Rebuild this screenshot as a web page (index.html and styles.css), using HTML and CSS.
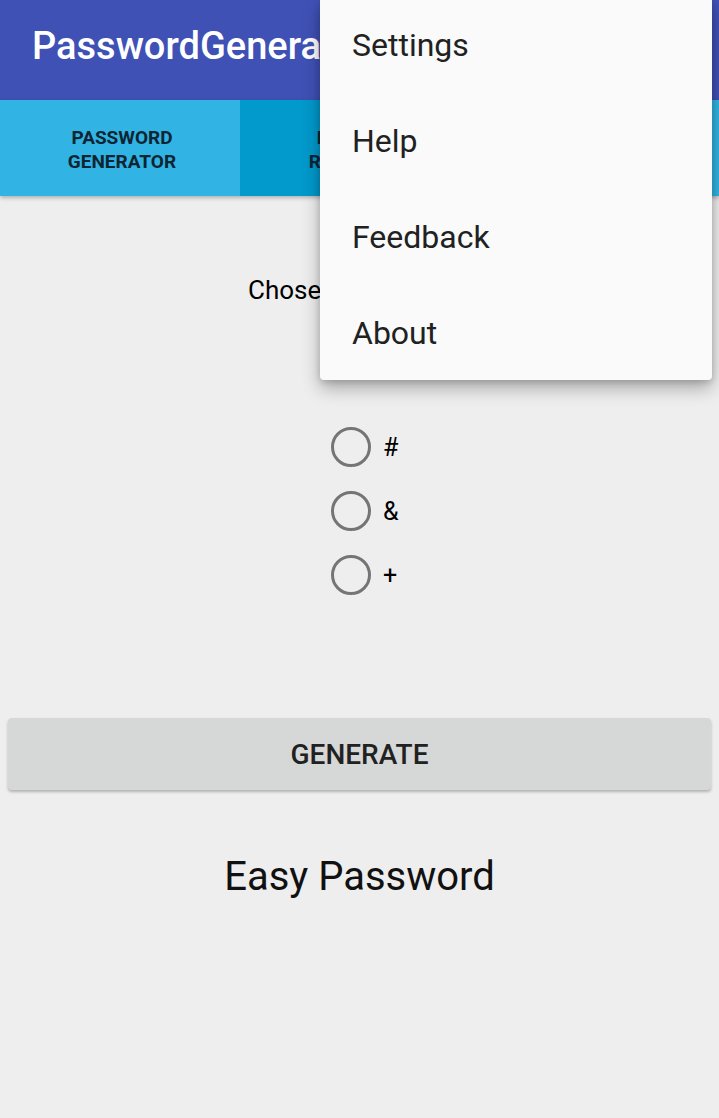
FILE: index.html
```html
<!DOCTYPE html>
<html>
<head>
<meta charset="utf-8">
<link rel="stylesheet" href="styles.css">
</head>
<body>
<div class="app">
  <header class="toolbar">
    <div class="title">PasswordGenerator</div>
  </header>
  <nav class="tabs">
    <div class="tab tab-active">PASSWORD<br>GENERATOR</div>
    <div class="tab tab-mid">PREVIOUS<br>RECOVERED</div>
    <div class="tab tab-last">MY<br>HISTORY</div>
  </nav>
  <main class="content">
    <p class="prompt">Chose a separator:</p>
    <div class="radios">
      <label class="radio"><span class="circle"></span><span class="lbl">#</span></label>
      <label class="radio"><span class="circle"></span><span class="lbl">&amp;</span></label>
      <label class="radio"><span class="circle"></span><span class="lbl">+</span></label>
    </div>
    <button class="generate">GENERATE</button>
    <p class="result">Easy Password</p>
  </main>
  <div class="menu">
    <div class="menu-item">Settings</div>
    <div class="menu-item">Help</div>
    <div class="menu-item">Feedback</div>
    <div class="menu-item">About</div>
  </div>
</div>
</body>
</html>
```
FILE: styles.css
```css
* { box-sizing: border-box; }
html, body {
  margin: 0;
  padding: 0;
  background: #eeeeee;
  font-family: Roboto, "Noto Sans", sans-serif;
}
.app {
  position: relative;
  width: 719px;
  height: 1118px;
  overflow: hidden;
}
.toolbar {
  height: 100px;
  background: #3f51b5;
  display: flex;
  align-items: center;
  padding: 0 0 8px 32px;
}
.title {
  color: #ffffff;
  font-size: 38px;
  font-weight: 500;
  white-space: nowrap;
}
.tabs {
  display: grid;
  grid-template-columns: 240px 240px 1fr;
  height: 96px;
  box-shadow: 0 2px 4px rgba(0,0,0,0.25);
  position: relative;
}
.tab {
  display: flex;
  align-items: center;
  justify-content: center;
  text-align: center;
  font-size: 19px;
  font-weight: 700;
  line-height: 24px;
  padding: 4px 0 0 4px;
  color: #0d2533;
  background: #31b4e3;
}
.tab-mid { background: #0299cc; }
.content {
  display: flex;
  flex-direction: column;
}
.prompt {
  margin: 78px 0 0;
  padding-right: 6px;
  text-align: center;
  font-size: 26px;
  line-height: 32px;
  color: #000;
}
.radios {
  margin: 109px 0 0 331px;
  display: flex;
  flex-direction: column;
}
.radio {
  display: flex;
  align-items: center;
  height: 64px;
}
.circle {
  width: 40px;
  height: 40px;
  border: 3.5px solid #757575;
  border-radius: 50%;
}
.lbl {
  margin-left: 12px;
  font-size: 25px;
  color: #000;
}
.generate {
  margin: 111px 8px 0;
  height: 72px;
  border: none;
  border-radius: 4px;
  background: #d6d7d7;
  box-shadow: 0 2px 3px rgba(0,0,0,0.25);
  font-family: Roboto, "Noto Sans", sans-serif;
  font-size: 28px;
  font-weight: 500;
  color: #212121;
}
.result {
  margin: 63px 0 0;
  text-align: center;
  font-size: 40px;
  line-height: 48px;
  color: #111;
}
.menu {
  position: absolute;
  top: 0;
  left: 320px;
  width: 392px;
  height: 380px;
  background: #fafafa;
  border-radius: 0 0 4px 4px;
  box-shadow: 0 8px 18px rgba(0,0,0,0.3), 0 2px 6px rgba(0,0,0,0.15);
}
.menu-item {
  height: 96px;
  display: flex;
  align-items: center;
  padding: 0 0 6px 32px;
  font-size: 32px;
  color: #212121;
}
```
